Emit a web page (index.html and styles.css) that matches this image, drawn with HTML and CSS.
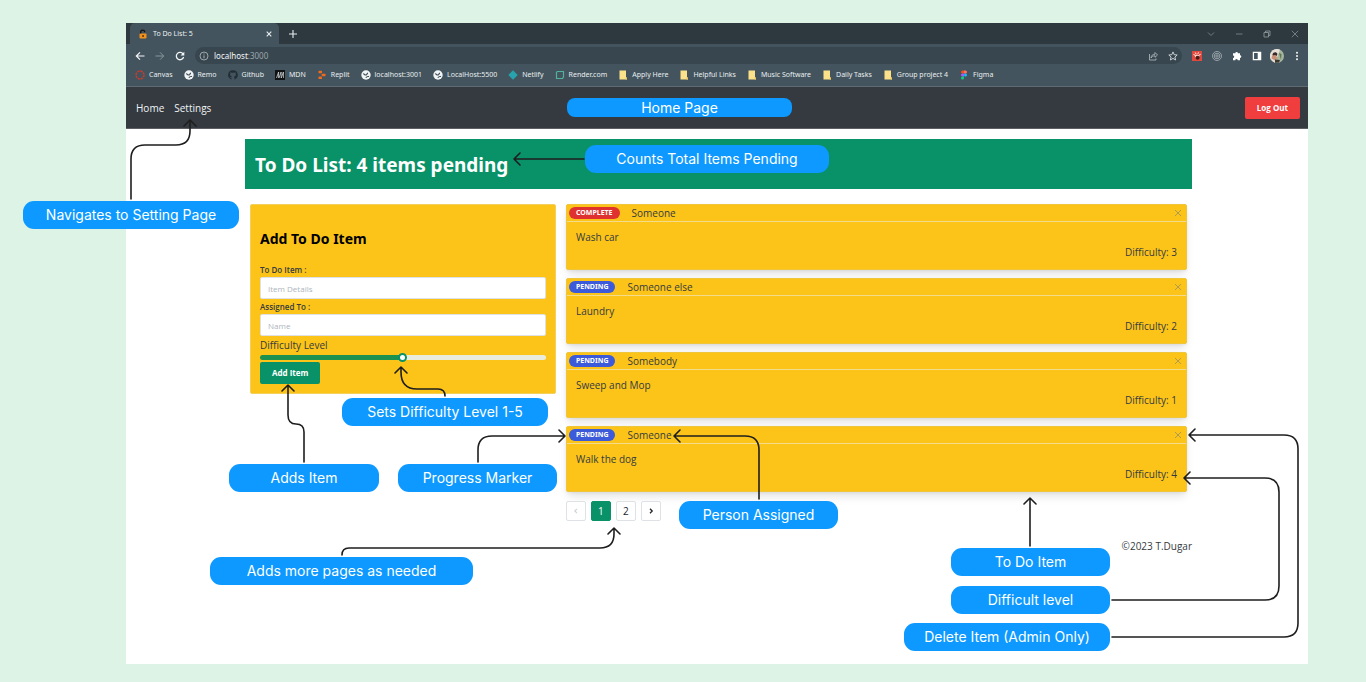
FILE: index.html
```html
<!DOCTYPE html>
<html lang="en">
<head>
<meta charset="utf-8">
<meta name="viewport" content="width=device-width, initial-scale=1">
<title>To Do List: 5</title>
<link rel="stylesheet" href="styles.css">
</head>
<body>
<svg class="sprite" aria-hidden="true">
  <symbol id="globe" viewBox="0 0 10 10"><circle cx="5" cy="5" r="4.700" fill="#f1f4f5"/><path d="M2 3.800C3 3.500 3.500 5.200 5 5 6.200 4.800 5.500 3.400 7 3.200M5 7.800C5.200 6.500 6.500 6.700 8 6.200" fill="none" stroke="#40515b" stroke-width="1.200"/></symbol>
  <symbol id="folder" viewBox="0 0 10 10"><path d="M1.500.5h6.500v6.500l1 1v1.500h-7.500z" fill="#fbe28a"/><path d="M7.500 7.500h1.500v2h-1.500z" fill="#e9c65c"/></symbol>
  <symbol id="cross" viewBox="0 0 10 10"><path d="M2 2l6 6M8 2l-6 6" fill="none" stroke="currentColor" stroke-width="1"/></symbol>
</svg>
<main class="board">
  <div class="window">
    <div class="tabs">
      <div class="tab">
        <svg class="icon" viewBox="0 0 10 10"><path d="M2.700 5V3.200a2 2 0 0 1 4 0" fill="none" stroke="#17130f" stroke-width="1.300"/><rect x="1.500" y="4.500" width="7" height="5" rx="1" fill="#f0921e"/><path d="M4.300 6h1.500v2H4.300z" fill="#5d330c"/></svg>
        <span class="tab-title">To Do List: 5</span>
        <button class="plain" type="button" aria-label="Close tab"><svg class="icon" viewBox="0 0 10 10"><path d="M2.700 2.700l4.600 4.600M7.300 2.700L2.700 7.300" stroke="#e8edef" stroke-width="1.100"/></svg></button>
      </div>
      <button class="plain new-tab" type="button" aria-label="New tab"><svg class="icon" viewBox="0 0 10 10"><path d="M5 1v8M1 5h8" stroke="#e8edef" stroke-width="1.100"/></svg></button>
      <div class="window-controls">
        <svg class="icon" viewBox="0 0 10 10"><path d="M2 3.500l3 3 3-3" fill="none" stroke="#727c82"/></svg>
        <svg class="icon" viewBox="0 0 10 10"><path d="M2 5h6.500" stroke="#727c82"/></svg>
        <svg class="icon" viewBox="0 0 10 10"><path d="M2 3.500h4.500v4.500H2zM3.500 3.500V2h4.500v4.500H6.500" fill="none" stroke="#8d969b" stroke-width=".9"/></svg>
        <svg class="icon" viewBox="0 0 10 10"><path d="M1.800 1.800l6.400 6.400M8.200 1.800L1.800 8.200" stroke="#727c82"/></svg>
      </div>
    </div>
    <div class="toolbar">
      <button class="plain" type="button" aria-label="Back"><svg class="icon" viewBox="0 0 10 10"><path d="M9.500 5h-8M5 1.300L1.300 5 5 8.700" fill="none" stroke="#f3f6f7" stroke-width="1.200"/></svg></button>
      <button class="plain" type="button" aria-label="Forward"><svg class="icon" viewBox="0 0 10 10"><path d="M.5 5h8M5 1.300L8.700 5 5 8.700" fill="none" stroke="#8a969d" stroke-width="1"/></svg></button>
      <button class="plain" type="button" aria-label="Reload"><svg class="icon" viewBox="0 0 10 10"><path d="M8.300 3.300A3.700 3.700 0 1 0 8.600 6" fill="none" stroke="#f3f6f7" stroke-width="1.300"/><path d="M9.300.8v3.700H5.600z" fill="#f3f6f7"/></svg></button>
      <div class="address">
        <svg class="icon" viewBox="0 0 10 10"><circle cx="5" cy="5" r="4" fill="none" stroke="#b4bcc0" stroke-width=".8"/><path d="M5 4.400V7.300M5 2.500v1" stroke="#b4bcc0" stroke-width=".9"/></svg>
        <span class="url"><b>localhost</b>:3000</span>
        <svg class="icon" viewBox="0 0 10 10"><path d="M1.500 3v6h6.500V7.500M3 7c.3-2.500 1.500-3.700 4-3.800V1.500L9.500 4 7 6.300V4.800C5 4.800 4 5.500 3 7z" fill="none" stroke="#b6bfc3" stroke-width=".8"/></svg>
        <svg class="icon" viewBox="0 0 10 10"><path d="M5 .9l1.200 2.800 3 .3-2.300 2 .7 3L5 7.400 2.400 9l.7-3L.8 4l3-.3z" fill="none" stroke="#d7dcdf" stroke-width=".9"/></svg>
      </div>
      <div class="extensions">
        <svg class="icon" viewBox="0 0 10 10"><path d="M0 0h10v10H0z" fill="#e2493e"/><path d="M1.500 3.500l2 .8M3.300 1.500l.7 1.500M6.500 1.300l-.6 1.600M8.700 3.300l-1.700.8" stroke="#fff" stroke-width=".9"/><path d="M2.500 4.500l2.500-1 2.500 1-.5 2H3.500z" fill="#f9d6cf"/><circle cx="5.600" cy="6.700" r="2" fill="#421d1a"/></svg>
        <svg class="icon" viewBox="0 0 10 10" fill="none" stroke="#b9c1c5" stroke-width=".7"><circle cx="5" cy="5" r="4.500"/><circle cx="5" cy="5" r="2.800"/><circle cx="5" cy="5" r="1.200"/></svg>
        <svg class="icon" viewBox="0 0 10 10"><path d="M1 2.200h2.300a1.300 1.300 0 0 1 2.600 0H8V4.300a1.300 1.300 0 0 1 0 2.600V9.200H5.700a1.200 1.200 0 0 0-2.400 0H1V6.900a1.200 1.200 0 0 0 0-2.400z" fill="#fff"/></svg>
        <svg class="icon" viewBox="0 0 10 10"><path d="M1.400 1.400h7.200v7.200H1.400z" fill="none" stroke="#fff" stroke-width="1.300"/><path d="M5.700 1.500h3v7h-3z" fill="#fff"/></svg>
        <svg class="avatar" viewBox="0 0 14 14"><circle cx="7" cy="7" r="7" fill="#a5b69c"/><path d="M1 3.200a7 7 0 0 1 9-2.500L8 6 5 13.700A7 7 0 0 1 1 3.200z" fill="#e6dfd8"/><path d="M2.500 5.500C3 3 6.500 2.500 7.500 5l-1 2H3z" fill="#392b27"/><path d="M2 6.500l3.500-.5 2 3L5 11.500 1.500 9.500z" fill="#c99078"/><path d="M5 10.500l5 .5-1 2.500-4 .3z" fill="#3c3630"/><path d="M9 4l2.500 1-.5 6z" fill="#5c7756"/></svg>
        <svg class="icon" viewBox="0 0 10 10" fill="#f3f6f7"><circle cx="5" cy="1.700" r="1"/><circle cx="5" cy="5" r="1"/><circle cx="5" cy="8.300" r="1"/></svg>
      </div>
    </div>
    <nav class="bookmarks" aria-label="Bookmarks">
      <a href="#"><svg class="icon" viewBox="0 0 10 10"><circle cx="5" cy="5" r="4" fill="none" stroke="#c93c2e" stroke-width="1.500" stroke-dasharray="2.300 .8"/></svg>Canvas</a>
      <a href="#"><svg class="icon"><use href="#globe"/></svg>Remo</a>
      <a href="#"><svg class="icon" viewBox="0 0 10 10"><path d="M5 .3a4.700 4.700 0 0 0-1.500 9.200V8C2.300 8.200 2 7.500 1.600 7 2.500 6.900 2.700 7.400 3.600 7.200L4 6.500C2.500 6.300 1.900 5.300 2.300 3.500L2.400 2.200 3.800 2.700h2.400L7.600 2.200l.1 1.300C8.100 5.300 7.500 6.300 6 6.500l.4 1v2A4.700 4.700 0 0 0 5 .3z" fill="#222e36"/></svg>Github</a>
      <a href="#"><svg class="icon" viewBox="0 0 10 10"><path d="M0 0h10v10H0z" fill="#101214"/><path d="M1.500 8L3.600 2M4 8L6.100 2v6M6.300 8L8.400 2v6M3.600 2v6" stroke="#e8ebec" stroke-width=".7"/></svg>MDN</a>
      <a href="#"><svg class="icon" viewBox="0 0 10 10" fill="#ed6b1e"><rect x="1.500" y=".8" width="3.500" height="2.500" rx=".6"/><rect x="4.800" y="3.700" width="3.700" height="2.500" rx=".6"/><rect x="1.500" y="6.600" width="3.500" height="2.500" rx=".6"/></svg>Replit</a>
      <a href="#"><svg class="icon"><use href="#globe"/></svg>localhost:3001</a>
      <a href="#"><svg class="icon"><use href="#globe"/></svg>LocalHost:5500</a>
      <a href="#"><svg class="icon" viewBox="0 0 10 10"><path d="M5 .3L9.700 5 5 9.700.3 5z" fill="#27a3ae"/></svg>Netlify</a>
      <a href="#"><svg class="icon" viewBox="0 0 10 10"><path d="M1.500 2.200L2.500 1.500h6v5.500L7.500 8.500H1.500z" fill="none" stroke="#53b29b" stroke-width="1.200"/></svg>Render.com</a>
      <a href="#"><svg class="icon"><use href="#folder"/></svg>Apply Here</a>
      <a href="#"><svg class="icon"><use href="#folder"/></svg>Helpful Links</a>
      <a href="#"><svg class="icon"><use href="#folder"/></svg>Music Software</a>
      <a href="#"><svg class="icon"><use href="#folder"/></svg>Daily Tasks</a>
      <a href="#"><svg class="icon"><use href="#folder"/></svg>Group project 4</a>
      <a href="#"><svg class="icon" viewBox="0 0 10 10"><path d="M5 .5H3.500a1.500 1.500 0 0 0 0 3H5z" fill="#f24e1e"/><path d="M5 .5h1.500a1.500 1.500 0 0 1 0 3H5z" fill="#ff7262"/><path d="M5 3.500H3.500a1.500 1.500 0 0 0 0 3H5z" fill="#a259ff"/><circle cx="6.500" cy="5" r="1.500" fill="#1abcfe"/><path d="M5 6.500H3.500A1.500 1.500 0 1 0 5 8z" fill="#0acf83"/></svg>Figma</a>
    </nav>
    <header class="site-nav">
      <a href="#">Home</a>
      <a href="#">Settings</a>
      <button class="btn danger" type="button">Log Out</button>
    </header>
    <div class="page">
      <h1 class="banner">To Do List: 4 items pending</h1>
      <div class="columns">
        <form class="add-form">
          <h2>Add To Do Item</h2>
          <label for="item">To Do Item :</label>
          <input class="field" id="item" type="text" placeholder="Item Details">
          <label for="person">Assigned To :</label>
          <input class="field" id="person" type="text" placeholder="Name">
          <label class="level-label" for="level">Difficulty Level</label>
          <input class="slider" id="level" type="range" min="1" max="5" value="3">
          <button class="btn primary" type="button">Add Item</button>
        </form>
        <section class="list" aria-label="To do items">
          <article class="item">
            <div class="item-head"><span class="badge complete">COMPLETE</span><span class="who">Someone</span><button class="plain remove" type="button" aria-label="Delete"><svg class="icon"><use href="#cross"/></svg></button></div>
            <p class="task">Wash car</p><p class="difficulty">Difficulty: 3</p>
          </article>
          <article class="item">
            <div class="item-head"><span class="badge">PENDING</span><span class="who">Someone else</span><button class="plain remove" type="button" aria-label="Delete"><svg class="icon"><use href="#cross"/></svg></button></div>
            <p class="task">Laundry</p><p class="difficulty">Difficulty: 2</p>
          </article>
          <article class="item">
            <div class="item-head"><span class="badge">PENDING</span><span class="who">Somebody</span><button class="plain remove" type="button" aria-label="Delete"><svg class="icon"><use href="#cross"/></svg></button></div>
            <p class="task">Sweep and Mop</p><p class="difficulty">Difficulty: 1</p>
          </article>
          <article class="item">
            <div class="item-head"><span class="badge">PENDING</span><span class="who">Someone</span><button class="plain remove" type="button" aria-label="Delete"><svg class="icon"><use href="#cross"/></svg></button></div>
            <p class="task">Walk the dog</p><p class="difficulty">Difficulty: 4</p>
          </article>
          <div class="pager">
            <button type="button" disabled aria-label="Previous page"><svg class="icon" viewBox="0 0 10 10"><path d="M6 2.800L3.800 5 6 7.200" fill="none" stroke="currentColor" stroke-width="1.200"/></svg></button>
            <button class="current" type="button">1</button>
            <button type="button">2</button>
            <button type="button" aria-label="Next page"><svg class="icon" viewBox="0 0 10 10"><path d="M4 2.800L6.200 5 4 7.200" fill="none" stroke="currentColor" stroke-width="1.300"/></svg></button>
          </div>
        </section>
      </div>
      <footer class="copyright">©2023 T.Dugar</footer>
    </div>
  </div>

  <div class="notes">
    <svg class="arrows" viewBox="0 0 1366 682" aria-hidden="true">
      <path d="M131 199V159Q131 145 145 145H176Q190 145 190 131V120M184 126l6-6 6 6"/>
      <path d="M584 159H514M520 153l-6 6 6 6"/>
      <path d="M304 462V432Q304 424 296 424T288 415V385M282 391l6-6 6 6"/>
      <path d="M445 396Q445 389 438 389H417Q401 389 401 372V367M395 373l6-6 6 6"/>
      <path d="M478 462V450Q478 436 492 436H565M559 430l6 6-6 6"/>
      <path d="M759 499V450Q759 436 745 436H674M680 430l-6 6 6 6"/>
      <path d="M342 555Q342 548 349 548H600Q614 548 614 534V528M608 534l6-6 6 6"/>
      <path d="M1030 546V498M1024 504l6-6 6 6"/>
      <path d="M1112 600H1265Q1279 600 1279 586V492Q1279 478 1265 478H1184M1190 472l-6 6 6 6"/>
      <path d="M1112 637H1284Q1298 637 1298 623V449Q1298 435 1284 435H1189M1195 429l-6 6 6 6"/>
    </svg>
    <span class="note n-home">Home Page</span>
    <span class="note n-settings">Navigates to Setting Page</span>
    <span class="note n-count">Counts Total Items Pending</span>
    <span class="note n-level">Sets Difficulty Level 1-5</span>
    <span class="note n-add">Adds Item</span>
    <span class="note n-progress">Progress Marker</span>
    <span class="note n-person">Person Assigned</span>
    <span class="note n-pages">Adds more pages as needed</span>
    <span class="note n-item">To Do Item</span>
    <span class="note n-difficulty">Difficult level</span>
    <span class="note n-delete">Delete Item (Admin Only)</span>
  </div>
</main>
</body>
</html>
```
FILE: styles.css
```css
* { box-sizing: border-box; }
body { margin: 0; background: #dcf3e6; font-family: "Open Sans", "Noto Sans", sans-serif; font-size: 10px; line-height: 14px; color: #343a40; }
h1, h2, p { margin: 0; }
a { color: inherit; text-decoration: none; }
button, input { font: inherit; }
.sprite { position: absolute; width: 0; height: 0; }
.board { position: relative; min-height: 100vh; display: flex; padding: 23px 58px 18px 126px; }
.window { flex: 1; min-width: 0; background: #fff; }
.icon { width: 10px; height: 10px; flex: none; display: block; }
.plain { border: 0; padding: 0; background: none; color: inherit; cursor: pointer; }

.tabs { display: flex; align-items: center; height: 21px; background: #2d383f; color: #eef2f3; }
.tab { display: flex; align-items: center; align-self: stretch; gap: 5px; width: 149px; margin-left: 4px; padding: 0 5px 0 8px; background: #43545e; border-radius: 5px 5px 0 0; font-family: "Noto Sans", sans-serif; font-size: 7px; }
.tab-title { flex: 1; }
.new-tab { margin-left: 9px; }
.window-controls { display: flex; gap: 18px; margin-left: auto; padding-right: 8px; }

.toolbar { display: flex; align-items: center; gap: 10px; height: 23px; padding: 0 6px 0 9px; background: #43545e; }
.address { flex: 1; display: flex; align-items: center; gap: 5px; height: 17px; padding: 0 4px; border-radius: 9px; background: #38464f; font-family: "Noto Sans", sans-serif; font-size: 8px; color: #9ca7ad; }
.address .icon:last-child { margin-left: 5px; }
.url { flex: 1; }
.url b { font-weight: 400; color: #f4f6f7; }
.extensions { display: flex; align-items: center; gap: 10px; }
.avatar { width: 14px; height: 14px; margin: 0 -2px; }

.bookmarks { display: flex; align-items: center; gap: 11px; height: 20px; padding: 0 9px 3px; background: #43545e; border-bottom: 1px solid #5c6c72; color: #e9eef0; font-family: "Noto Sans", sans-serif; font-size: 7px; white-space: nowrap; }
.bookmarks a { display: flex; align-items: center; gap: 4px; }

.site-nav { display: flex; align-items: center; gap: 10px; height: 42px; padding: 0 8px 0 10px; background: #343a40; border-bottom: 1px solid #5b5e62; color: #f1f3f5; }
.btn { height: 22px; padding: 0 12px; border: 0; border-radius: 2px; color: #fff; font-size: 8px; font-weight: 700; }
.danger { margin-left: auto; background: #f03e3e; }
.primary { align-self: flex-start; background: #099268; }

.page { margin: 0 116px 0 119px; padding-top: 10px; }
.banner { padding: 12px 10px 10px; background: #099268; color: #fff; font-family: "Noto Sans", sans-serif; font-size: 19px; line-height: 28px; font-weight: 700; }
.columns { display: grid; grid-template-columns: 33fr 67fr; align-items: start; gap: 10px; padding: 15px 5px 0; }
.add-form { display: flex; flex-direction: column; padding: 24px 9px 9px; background: #fcc419; border: 1px solid #f3cf5c; border-radius: 2px; }
.add-form h2 { margin-bottom: 14px; color: #000; font-family: "Noto Sans", sans-serif; font-size: 14px; line-height: 20px; font-weight: 700; }
.add-form label { height: 14px; font-size: 8px; line-height: 14px; font-weight: 600; }
.add-form .level-label { height: 16px; font-size: 10px; line-height: 16px; font-weight: 400; }
.field { width: 100%; height: 22px; margin: 0 0 1px; padding: 0 7px; border: 1px solid #dee2e6; border-radius: 2px; background: #fff; font-size: 8px; }
.field::placeholder { color: #adb5bd; opacity: 1; }
.slider { appearance: none; width: 100%; height: 9px; margin: 0; background: none; }
.slider::-webkit-slider-runnable-track { height: 5px; border-radius: 3px; background: linear-gradient(to right, #1c9150 50%, #e9ecda 50%); }
.slider::-webkit-slider-thumb { appearance: none; width: 9px; height: 9px; margin-top: -2px; border: 2px solid #099268; border-radius: 50%; background: #fff; }

.list { display: flex; flex-direction: column; gap: 8px; }
.item { background: #fcc419; border: 1px solid #efc53c; border-radius: 2px; box-shadow: 0 6px 9px -2px rgb(0 0 0 / 12%), 0 1px 3px rgb(0 0 0 / 6%); }
.item-head { display: flex; align-items: center; gap: 12px; height: 17px; padding: 0 3px 0 2px; border-bottom: 1px solid #f3dc8b; }
.badge { padding: 0 7px; border-radius: 6px; background: #3b5bdb; color: #fff; font-family: "Noto Sans", sans-serif; font-size: 7px; line-height: 12px; font-weight: 700; }
.complete { background: #e03131; }
.remove { margin-left: auto; color: #b09c50; }
.task { padding: 8px 9px 0; }
.difficulty { padding: 1px 9px 10px; text-align: right; }

.pager { display: flex; gap: 5px; margin-top: 1px; }
.pager button { display: grid; place-items: center; width: 20px; height: 20px; padding: 0; border: 1px solid #dee2e6; border-radius: 2px; background: #fff; color: #212529; }
.pager button:disabled { color: #ced4da; }
.pager .current { background: #099268; border-color: #099268; color: #fff; }
.copyright { padding-top: 18px; text-align: right; }

.notes { position: absolute; left: 0; top: 0; width: 1366px; height: 682px; pointer-events: none; }
.arrows { display: block; width: 100%; height: 100%; fill: none; stroke: #1e1e1e; stroke-width: 1.600; stroke-linecap: round; stroke-linejoin: round; }
.note { position: absolute; width: 159px; border-radius: 11px; background: #0d99ff; color: #fff; font-family: Inter, sans-serif; font-size: 14px; line-height: 28px; text-align: center; white-space: nowrap; }
.n-home { left: 567px; top: 98px; width: 225px; line-height: 19px; border-radius: 8px; }
.n-settings { left: 23px; top: 201px; width: 216px; }
.n-count { left: 585px; top: 145px; width: 244px; }
.n-level { left: 342px; top: 398px; width: 206px; }
.n-add { left: 229px; top: 464px; width: 150px; }
.n-progress { left: 398px; top: 464px; }
.n-person { left: 679px; top: 501px; }
.n-pages { left: 210px; top: 557px; width: 263px; }
.n-item { left: 951px; top: 548px; }
.n-difficulty { left: 951px; top: 586px; }
.n-delete { left: 904px; top: 623px; width: 206px; }
```
